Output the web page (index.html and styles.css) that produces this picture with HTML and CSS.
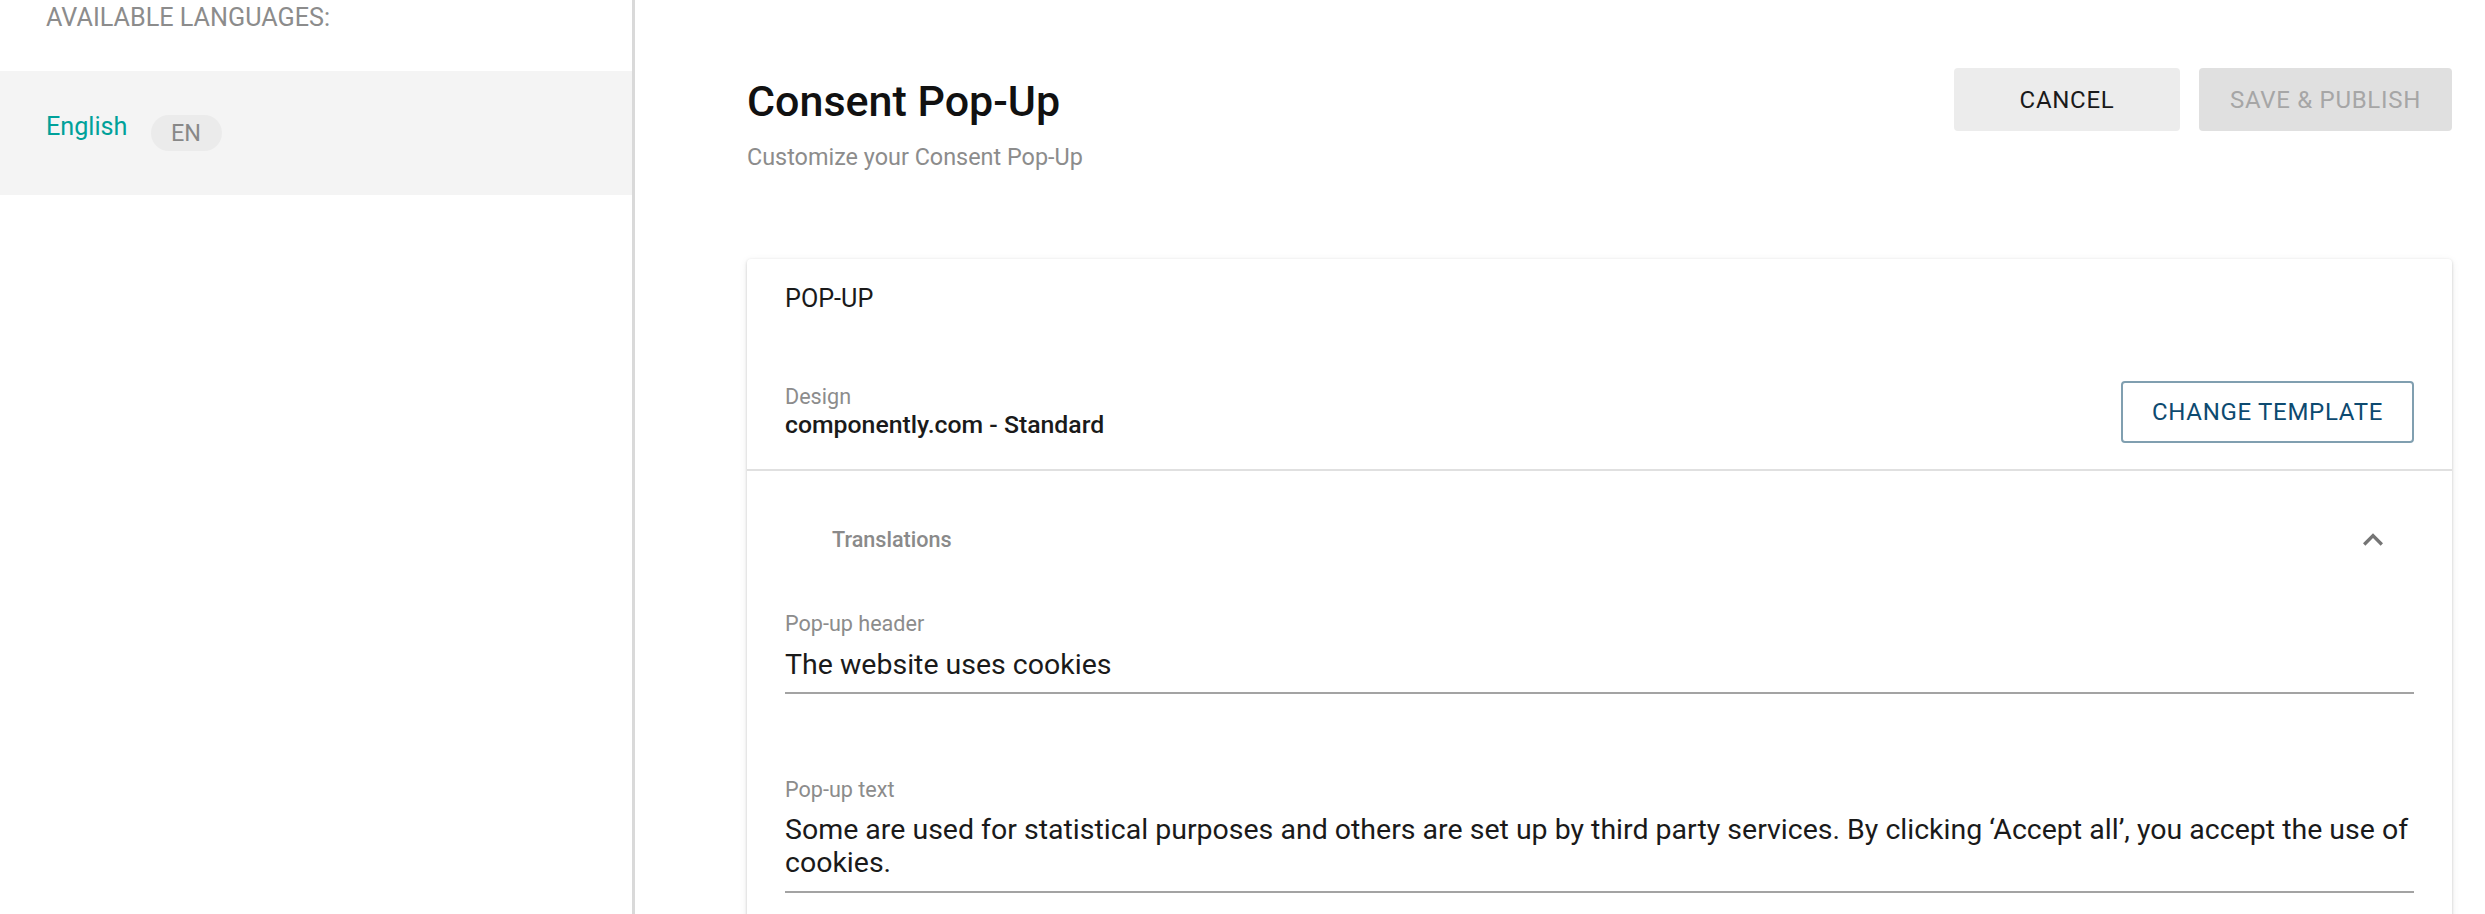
FILE: index.html
```html
<!DOCTYPE html>
<html lang="en">
<head>
<meta charset="utf-8">
<title>Consent Pop-Up</title>
<link rel="stylesheet" href="styles.css">
</head>
<body>
<div class="app">
  <aside class="sidebar">
    <div class="sidebar-title">Available languages:</div>
    <div class="lang-row">
      <span class="lang-name">English</span>
      <span class="lang-chip">EN</span>
    </div>
  </aside>
  <main class="main">
    <header class="page-header">
      <div class="page-heading">
        <h1 class="page-title">Consent Pop-Up</h1>
        <p class="page-subtitle">Customize your Consent Pop-Up</p>
      </div>
      <div class="page-actions">
        <button class="btn btn-cancel">CANCEL</button>
        <button class="btn btn-save" disabled>SAVE &amp; PUBLISH</button>
      </div>
    </header>
    <section class="card">
      <div class="card-top">
        <div class="card-title">POP-UP</div>
        <div class="design-row">
          <div class="design-info">
            <div class="field-label">Design</div>
            <div class="design-value">componently.com - Standard</div>
          </div>
          <button class="btn btn-outline">CHANGE TEMPLATE</button>
        </div>
      </div>
      <div class="card-body">
        <div class="panel-header">
          <span class="panel-title">Translations</span>
          <svg class="chevron" viewBox="0 0 24 24" width="40" height="40" aria-hidden="true"><path d="M12 8l-6 6 1.41 1.41L12 10.83l4.59 4.58L18 14z" fill="#757575"/></svg>
        </div>
        <div class="field">
          <div class="field-label">Pop-up header</div>
          <div class="field-input">The website uses cookies</div>
        </div>
        <div class="field field-second">
          <div class="field-label">Pop-up text</div>
          <div class="field-input field-multiline">Some are used for statistical purposes and others are set up by third party services. By clicking ‘Accept all’, you accept the use of cookies.</div>
        </div>
      </div>
    </section>
  </main>
</div>
</body>
</html>
```
FILE: styles.css
```css
* { box-sizing: border-box; }

html, body {
  margin: 0;
  padding: 0;
  background: #ffffff;
}

body {
  font-family: Roboto, "Liberation Sans", Arial, sans-serif;
  color: #1a1a1a;
  height: 914px;
  overflow: hidden;
}

.app {
  display: flex;
  height: 914px;
}

/* Sidebar */
.sidebar {
  width: 635px;
  flex: 0 0 635px;
  border-right: 3px solid #d9d9d9;
  padding-top: 3px;
}

.sidebar-title {
  padding-left: 46px;
  font-size: 25.2px;
  line-height: 30px;
  color: #8c8c8c;
  text-transform: uppercase;
  margin-bottom: 38px;
}

.lang-row {
  display: flex;
  align-items: flex-start;
  height: 124px;
  padding: 41px 0 0 46px;
  background: #f4f4f4;
}

.lang-name {
  font-size: 25.2px;
  line-height: 30px;
  color: #00a19a;
}

.lang-chip {
  margin: 3px 0 0 23px;
  width: 71px;
  height: 36px;
  border-radius: 18px;
  background: #ebebeb;
  color: #888888;
  font-size: 23.4px;
  line-height: 36px;
  text-align: center;
}

/* Main */
.main {
  flex: 1;
  padding: 68px 33px 0 112px;
  min-width: 0;
}

.page-header {
  display: flex;
  justify-content: space-between;
  align-items: flex-start;
}

.page-title {
  margin: 7px 0 0;
  font-size: 43px;
  line-height: 52px;
  font-weight: 470;
  color: #111111;
}

.page-subtitle {
  margin: 15.5px 0 0;
  font-size: 23.4px;
  line-height: 28px;
  color: #8c8c8c;
}

.page-actions {
  display: flex;
  gap: 19px;
}

.btn {
  font-family: Roboto, "Liberation Sans", Arial, sans-serif;
  font-size: 24px;
  font-weight: 450;
  letter-spacing: 0.7px;
  height: 63px;
  padding: 0 29px;
  border: none;
  border-radius: 4px;
  display: flex;
  align-items: center;
  justify-content: center;
  cursor: pointer;
}

.btn-cancel {
  min-width: 226px;
  background: #ececec;
  color: #1a1a1a;
}

.btn-save {
  min-width: 253px;
  background: #e0e0e0;
  color: #a6a6a6;
  cursor: default;
}

.btn-outline {
  height: 62px;
  width: 293px;
  background: #ffffff;
  color: #0d4a70;
  border: 2px solid #809fb0;
}

/* Card */
.card {
  margin-top: 88px;
  background: #ffffff;
  border-radius: 4px;
  box-shadow: 0 1px 3px rgba(0, 0, 0, 0.18), 0 2px 8px rgba(0, 0, 0, 0.08);
  min-height: 700px;
}

.card-top {
  padding: 25px 38px 26px;
  border-bottom: 2px solid #e0e0e0;
}

.card-title {
  font-size: 25.2px;
  line-height: 30px;
  color: #1a1a1a;
}

.design-row {
  margin-top: 67px;
  display: flex;
  justify-content: space-between;
  align-items: center;
}

.field-label {
  font-size: 21.6px;
  line-height: 26px;
  color: #8c8c8c;
}

.design-value {
  font-size: 24.8px;
  line-height: 29px;
  font-weight: 470;
  color: #1a1a1a;
}

.card-body {
  padding: 39px 38px 0;
}

.panel-header {
  display: flex;
  justify-content: space-between;
  align-items: center;
  height: 60px;
  padding: 0 21px 0 47px;
}

.panel-title {
  font-size: 21.6px;
  line-height: 26px;
  font-weight: 500;
  color: #8a8a8a;
}

.chevron {
  display: block;
}

.field {
  margin-top: 41px;
}

.field-second {
  margin-top: 83px;
}

.field-input {
  margin-top: 11px;
  font-size: 28.5px;
  line-height: 34px;
  color: #1a1a1a;
  padding-bottom: 10px;
  border-bottom: 2px solid #a3a3a3;
}

.field-multiline {
  margin-top: 10px;
  line-height: 33px;
  padding-bottom: 12px;
}
```
